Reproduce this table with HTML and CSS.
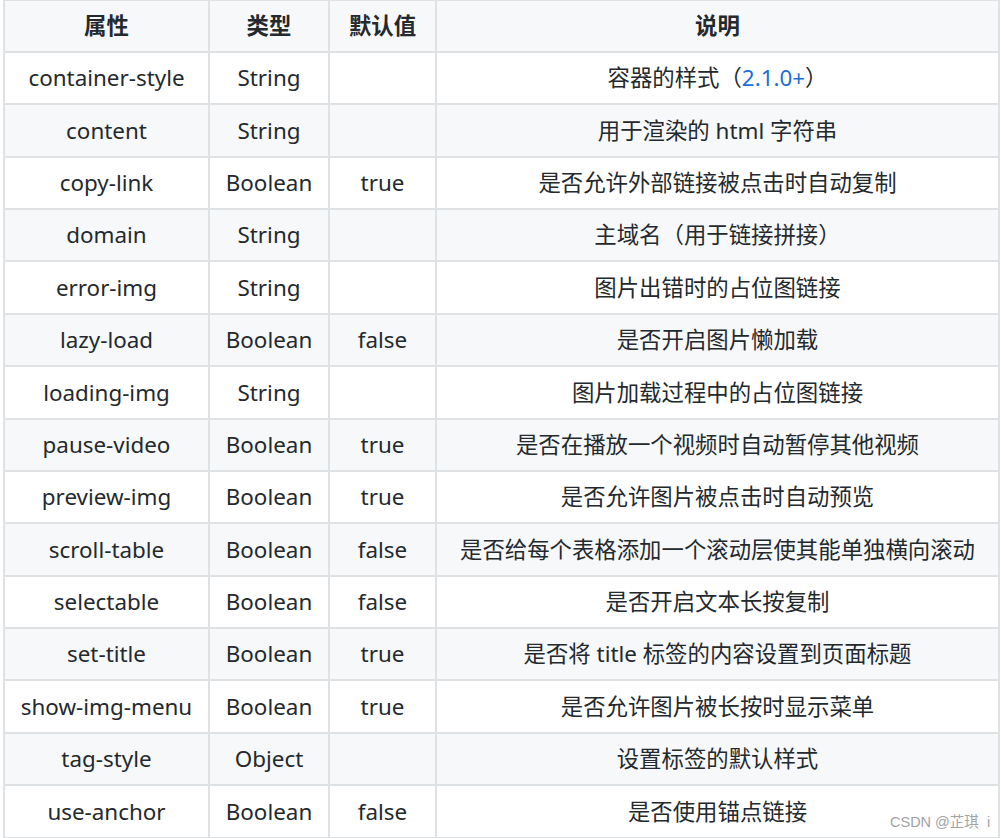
FILE: index.html
```html
<!DOCTYPE html>
<html lang="zh">
<head>
<meta charset="utf-8">
<title>属性表</title>
<link rel="stylesheet" href="styles.css">
</head>
<body>
<div class="wrap">
<table class="props">
  <thead>
    <tr>
      <th class="c1">属性</th>
      <th class="c2">类型</th>
      <th class="c3">默认值</th>
      <th class="c4">说明</th>
    </tr>
  </thead>
  <tbody>
    <tr><td>container-style</td><td>String</td><td></td><td>容器的样式（<a class="ver">2.1.0+</a>）</td></tr>
    <tr><td>content</td><td>String</td><td></td><td>用于渲染的 html 字符串</td></tr>
    <tr><td>copy-link</td><td>Boolean</td><td>true</td><td>是否允许外部链接被点击时自动复制</td></tr>
    <tr><td>domain</td><td>String</td><td></td><td>主域名（用于链接拼接）</td></tr>
    <tr><td>error-img</td><td>String</td><td></td><td>图片出错时的占位图链接</td></tr>
    <tr><td>lazy-load</td><td>Boolean</td><td>false</td><td>是否开启图片懒加载</td></tr>
    <tr><td>loading-img</td><td>String</td><td></td><td>图片加载过程中的占位图链接</td></tr>
    <tr><td>pause-video</td><td>Boolean</td><td>true</td><td>是否在播放一个视频时自动暂停其他视频</td></tr>
    <tr><td>preview-img</td><td>Boolean</td><td>true</td><td>是否允许图片被点击时自动预览</td></tr>
    <tr><td>scroll-table</td><td>Boolean</td><td>false</td><td>是否给每个表格添加一个滚动层使其能单独横向滚动</td></tr>
    <tr><td>selectable</td><td>Boolean</td><td>false</td><td>是否开启文本长按复制</td></tr>
    <tr><td>set-title</td><td>Boolean</td><td>true</td><td>是否将 title 标签的内容设置到页面标题</td></tr>
    <tr><td>show-img-menu</td><td>Boolean</td><td>true</td><td>是否允许图片被长按时显示菜单</td></tr>
    <tr><td>tag-style</td><td>Object</td><td></td><td>设置标签的默认样式</td></tr>
    <tr><td>use-anchor</td><td>Boolean</td><td>false</td><td>是否使用锚点链接</td></tr>
  </tbody>
</table>
<div class="watermark">CSDN @芷琪&nbsp;&nbsp;i</div>
</div>
</body>
</html>
```

FILE: styles.css
```css
html, body {
  margin: 0;
  padding: 0;
  background: #ffffff;
  overflow: hidden;
}

.wrap {
  position: relative;
  width: 1001px;
  height: 838px;
  overflow: hidden;
}

.props {
  border-collapse: collapse;
  margin: -1.5px 0 0 3px;
  width: 997px;
  table-layout: fixed;
  font-family: "Noto Sans", "Noto Sans CJK SC", sans-serif;
  font-size: 22.4px;
  line-height: 33.6px;
  color: #24292e;
}

.props th,
.props td {
  border: 2px solid #dfe2e5;
  padding: 8.4px 4px;
  text-align: center;
  white-space: nowrap;
}

.props th {
  font-weight: 700;
  background: #f6f8fa;
}

.props .c1 { width: 195px; }
.props .c2 { width: 110px; }
.props .c3 { width: 97px; }

.props tbody tr {
  background: #ffffff;
}

.props tbody tr:nth-child(2n) {
  background: #f6f8fa;
}

.ver {
  color: #1a6fd8;
  text-decoration: none;
}

.watermark {
  position: absolute;
  left: 890px;
  top: 812px;
  font-family: "Liberation Sans", "Noto Sans CJK SC", sans-serif;
  font-size: 14.5px;
  line-height: 20px;
  color: #a3a3a3;
}
```
